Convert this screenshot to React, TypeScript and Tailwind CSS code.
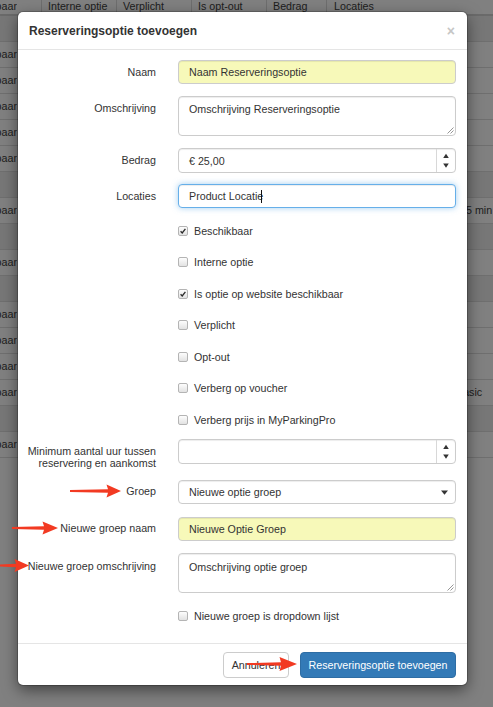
import React from "react";

type BgRow = { dark?: boolean; text?: boolean; right?: "min" | "basic" };

const bgRows: BgRow[] = [
  { dark: true },
  { text: true },
  { text: true },
  { text: true },
  { text: true },
  { text: true },
  { dark: true },
  { text: true, right: "min" },
  { dark: true },
  { text: true },
  { dark: true },
  { text: true },
  { text: true },
  { text: true },
  { text: true, right: "basic" },
  { dark: true },
  { text: true },
];

function Label({ children, className = "" }: { children: React.ReactNode; className?: string }) {
  return (
    <div className={`w-[138px] shrink-0 text-right text-[#333] whitespace-nowrap ${className}`}>{children}</div>
  );
}

function Spinner({ h }: { h: string }) {
  return (
    <div className={`w-[19px] ${h} border-l border-[#d8d8d8] flex items-center justify-center`}>
      <svg width="8" height="18" viewBox="0 0 8 18">
        <polygon points="1.2,6 4,1.8 6.8,6" fill="#333" />
        <polygon points="1.2,11.5 6.8,11.5 4,15.7" fill="#333" />
      </svg>
    </div>
  );
}

function Check({ checked }: { checked?: boolean }) {
  return (
    <span className="w-[10px] h-[10px] shrink-0 rounded-[2px] border border-[#b4b4b4] bg-linear-to-b from-[#fdfdfd] to-[#e2e2e2] flex items-center justify-center">
      {checked && (
        <svg width="8" height="8" viewBox="0 0 8 8">
          <path d="M1.6 4.3 L3.2 5.9 L6.4 1.8" stroke="#2a2a2a" strokeWidth="1.3" fill="none" />
        </svg>
      )}
    </span>
  );
}

function Grip() {
  return (
    <svg className="absolute right-[1px] bottom-[1px]" width="8" height="8" viewBox="0 0 8 8">
      <path d="M7.5 1.5 L1.5 7.5 M7.5 4.5 L4.5 7.5" stroke="#8a8a8a" strokeWidth="0.9" />
    </svg>
  );
}

function arrow(x1: number, x2: number, y: number, hb: number, hh: number) {
  return `${x1},${y - 0.9} ${hb},${y - 1.7} ${hb - 1.5},${y - hh} ${x2},${y} ${hb - 1.5},${y + hh} ${hb},${y + 1.7} ${x1},${y + 0.9}`;
}

const inputBase =
  "rounded-[4px] border border-[#cccccc] shadow-[inset_0_1px_1px_rgba(0,0,0,0.075)] text-[#333]";

export default function App() {
  const checks: [string, boolean][] = [
    ["Beschikbaar", true],
    ["Interne optie", false],
    ["Is optie op website beschikbaar", true],
    ["Verplicht", false],
    ["Opt-out", false],
    ["Verberg op voucher", false],
    ["Verberg prijs in MyParkingPro", false],
  ];

  return (
    <div className="relative w-[493px] h-[707px] overflow-hidden bg-[#808080] font-['Liberation_Sans',Arial,sans-serif] text-[10.7px]">
      {/* background table (dimmed by backdrop) */}
      <div className="text-[#1c1c1c]">
        <div className="h-[16px] border-b-2 border-[#6a6a6a] flex leading-[13px]">
          <div className="w-[41px] flex">
            <div className="w-[17px] overflow-hidden flex justify-end whitespace-nowrap">Beschikbaar</div>
          </div>
          <div className="w-[75px] border-l border-[#6e6e6e] pl-[6px]">Interne optie</div>
          <div className="w-[75px] border-l border-[#6e6e6e] pl-[6px]">Verplicht</div>
          <div className="w-[75px] border-l border-[#6e6e6e] pl-[6px]">Is opt-out</div>
          <div className="w-[60px] border-l border-[#6e6e6e] pl-[6px]">Bedrag</div>
          <div className="flex-1 border-l border-[#6e6e6e] pl-[7px]">Locaties</div>
        </div>
        {bgRows.map((r, i) => (
          <div
            key={i}
            className={`h-[26px] border-b border-[#6f6f6f] flex items-center whitespace-nowrap ${
              r.dark ? "bg-[#777777]" : "bg-[#808080]"
            }`}
          >
            <div className="w-[17px] shrink-0 overflow-hidden flex justify-end">{r.text ? "Beschikbaar" : ""}</div>
            {r.right === "min" && <div className="ml-[449px]">5 min</div>}
            {r.right === "basic" && <div className="ml-[439px]">Basic</div>}
          </div>
        ))}
      </div>

      {/* modal */}
      <div className="absolute left-[18px] top-[12px] w-[449px] h-[673px] bg-white rounded-[5px] shadow-[0_0_0_1px_rgba(0,0,0,0.2),0_5px_15px_rgba(0,0,0,0.5)] flex flex-col">
        <div className="h-[38px] shrink-0 border-b border-[#e5e5e5] pl-[11px] pr-[12px] flex items-center justify-between">
          <div className="text-[12px] font-bold text-[#333]">Reserveringsoptie toevoegen</div>
          <div className="text-[14px] font-bold text-[#c6c6c6] leading-none">×</div>
        </div>

        <div className="flex-1 pt-[10px] leading-[14px]">
          <div className="flex">
            <Label className="pt-[5px]">Naam</Label>
            <div className={`ml-[22px] w-[278px] h-[24px] ${inputBase} bg-[#f7f9b9] pl-[10px] flex items-center`}>
              Naam Reserveringsoptie
            </div>
          </div>

          <div className="flex mt-[12px]">
            <Label className="pt-[5px]">Omschrijving</Label>
            <div className={`relative ml-[22px] w-[278px] h-[40px] ${inputBase} bg-white pl-[10px] pt-[5px]`}>
              Omschrijving Reserveringsoptie
              <Grip />
            </div>
          </div>

          <div className="flex mt-[12px]">
            <Label className="pt-[5px]">Bedrag</Label>
            <div className={`ml-[22px] w-[278px] h-[25px] ${inputBase} bg-white flex items-center`}>
              <div className="flex-1 pl-[10px]">€ 25,00</div>
              <Spinner h="h-[23px]" />
            </div>
          </div>

          <div className="flex mt-[11px]">
            <Label className="pt-[5px]">Locaties</Label>
            <div className="ml-[22px] w-[278px] h-[24px] rounded-[4px] border border-[#66afe9] shadow-[inset_0_1px_1px_rgba(0,0,0,0.075),0_0_6px_rgba(102,175,233,0.6)] bg-white pl-[10px] flex items-center text-[#333]">
              <span>Product Locatie</span>
              <span className="w-px h-[13px] bg-[#111] -ml-[2px]" />
            </div>
          </div>

          <div className="mt-[7px]">
            {checks.map(([t, c]) => (
              <div key={t} className="h-[31.5px] flex items-center">
                <div className="w-[160px] shrink-0" />
                <Check checked={c} />
                <span className="ml-[6px] text-[#333]">{t}</span>
              </div>
            ))}
          </div>

          <div className="flex h-[25px] mt-[3.5px]">
            <Label className="h-[25px] pt-[7px] leading-[11.5px]">
              Minimum aantal uur tussen
              <br />
              reservering en aankomst
            </Label>
            <div className={`ml-[22px] w-[278px] h-[25px] ${inputBase} bg-white flex items-center`}>
              <div className="flex-1" />
              <Spinner h="h-[23px]" />
            </div>
          </div>

          <div className="flex mt-[16px]">
            <Label className="pt-[4px]">Groep</Label>
            <div className={`ml-[22px] w-[278px] h-[24px] ${inputBase} bg-white pl-[10px] pr-[7px] flex items-center justify-between`}>
              <span>Nieuwe optie groep</span>
              <svg width="7" height="5" viewBox="0 0 7 5">
                <polygon points="0,0.5 7,0.5 3.5,4.8" fill="#333" />
              </svg>
            </div>
          </div>

          <div className="flex mt-[13px]">
            <Label className="pt-[4px]">Nieuwe groep naam</Label>
            <div className={`ml-[22px] w-[278px] h-[24px] ${inputBase} bg-[#f7f9b9] pl-[10px] flex items-center`}>
              Nieuwe Optie Groep
            </div>
          </div>

          <div className="flex mt-[12px]">
            <Label className="pt-[6px]">Nieuwe groep omschrijving</Label>
            <div className={`relative ml-[22px] w-[278px] h-[40px] ${inputBase} bg-white pl-[10px] pt-[6px]`}>
              Omschrijving optie groep
              <Grip />
            </div>
          </div>

          <div className="mt-[7px] h-[32px] flex items-center">
            <div className="w-[160px] shrink-0" />
            <Check />
            <span className="ml-[6px] text-[#333]">Nieuwe groep is dropdown lijst</span>
          </div>
        </div>

        <div className="h-[42px] shrink-0 border-t border-[#e5e5e5] pt-[8px] pr-[11px] flex justify-end gap-[11px]">
          <div className="w-[66px] h-[26px] rounded-[4px] border border-[#cccccc] bg-white text-[#333] flex items-center justify-center">
            Annuleren
          </div>
          <div className="w-[156px] h-[26px] rounded-[4px] border border-[#2e6da4] bg-[#337ab7] text-white flex items-center justify-center">
            Reserveringsoptie toevoegen
          </div>
        </div>
      </div>

      {/* annotation arrows */}
      <svg className="absolute left-0 top-0 pointer-events-none" width="493" height="707" viewBox="0 0 493 707">
        <polygon points={arrow(70, 121, 491, 108, 6.5)} fill="#f23a22" />
        <polygon points={arrow(12, 58, 528, 44, 6.5)} fill="#f23a22" />
        <polygon points={arrow(-2, 29, 565.5, 16, 6.5)} fill="#f23a22" />
        <polygon points={arrow(247, 297, 664, 281, 7)} fill="#f23a22" />
      </svg>
    </div>
  );
}
